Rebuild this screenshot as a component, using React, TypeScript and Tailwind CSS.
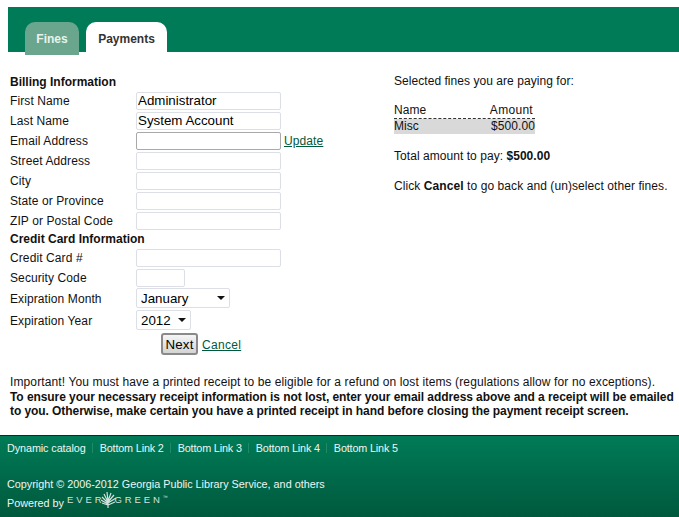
import React from 'react'

const font = { fontFamily: '"Liberation Sans", Arial, sans-serif' }

function Field({ label, value, dark, children }: { label: string; value?: string; dark?: boolean; children?: React.ReactNode }) {
  return (
    <div className="flex items-center h-5">
      <label className="w-[126px] shrink-0 text-xs tracking-[0.1px] text-[#111]">{label}</label>
      <input
        readOnly
        value={value ?? ''}
        className={`w-[145px] h-[18px] px-[1px] text-[13.33px] text-black bg-white rounded-[2px] border outline-none ${dark ? 'border-[#a9a9a9]' : 'border-[#dcdfe6]'}`}
      />
      {children}
    </div>
  )
}

function Dropdown({ label, value, width }: { label: string; value: string; width: string }) {
  return (
    <div className="flex items-center h-[22px]">
      <label className="w-[126px] shrink-0 text-xs tracking-[0.1px] text-[#111]">{label}</label>
      <div className={`relative h-5 self-start ${width}`}>
        <select defaultValue={value} className="block w-full h-full appearance-none bg-white border border-[#dcdfe6] rounded-[2px] pl-[4px] text-[13.33px] text-black outline-none">
          <option>{value}</option>
        </select>
        <svg className="absolute right-[5px] top-[8px] pointer-events-none" width="8" height="4" viewBox="0 0 8 4">
          <path d="M0 0h8L4 4z" fill="#111" />
        </svg>
      </div>
    </div>
  )
}

function EvergreenMark() {
  return (
    <svg width="15" height="16" viewBox="0 0 15 16" className="-ml-[4px] -mr-[1px] -my-[4px]" fill="none" stroke="#d5e2dc" strokeWidth="1.2">
      <path d="M7 16 L7 8 M7 13 L1 11 M7 12 L0 8 M7 11 L1 5 M7 10 L3 2 M7 9 L6 0 M7 9 L10 1 M7 10 L13 3 M7 11 L15 6 M7 13 L14 10" />
    </svg>
  )
}

const links = ['Dynamic catalog', 'Bottom Link 2', 'Bottom Link 3', 'Bottom Link 4', 'Bottom Link 5']

export default function App() {
  return (
    <div className="h-[517px] overflow-hidden bg-white flex flex-col" style={font}>
      {/* tabs */}
      <div className="pt-[7px] pl-2">
        <div className="h-[45px] bg-[#007b57] flex items-start pl-[17px] gap-[7px] pt-[15px]">
          <div className="w-[54px] h-[33px] bg-[#6aa68d] rounded-t-[10px] text-xs font-bold text-[#e8f2ec] flex justify-center pt-[9px]">Fines</div>
          <div className="w-[81px] h-[30px] bg-white rounded-t-[10px] text-xs font-bold text-[#333] flex justify-center pt-[9px]">Payments</div>
        </div>
      </div>

      <div className="flex pl-[10px] pt-[23px]">
        {/* form */}
        <div className="w-[384px] shrink-0">
          <h2 className="text-xs font-bold text-[#111] h-[16px] leading-[14px]">Billing Information</h2>
          <Field label="First Name" value="Administrator" />
          <Field label="Last Name" value="System Account" />
          <Field label="Email Address" dark>
            <a href="#" className="ml-[3px] text-xs tracking-[0.1px] text-[#00593d] underline">Update</a>
          </Field>
          <Field label="Street Address" />
          <Field label="City" />
          <Field label="State or Province" />
          <Field label="ZIP or Postal Code" />
          <h2 className="text-xs font-bold text-[#111] h-[17px] leading-[17px]">Credit Card Information</h2>
          <Field label="Credit Card #" />
          <div className="flex items-center h-5">
            <label className="w-[126px] shrink-0 text-xs tracking-[0.1px] text-[#111]">Security Code</label>
            <input readOnly className="w-[49px] h-[18px] bg-white rounded-[2px] border border-[#dcdfe6] outline-none" />
          </div>
          <Dropdown label="Exipration Month" value="January" width="w-[94px]" />
          <Dropdown label="Expiration Year" value="2012" width="w-[55px]" />
          <div className="flex items-center pl-[151px] pt-[1px] gap-[4px]">
            <button className="w-[37px] h-[22px] text-[13.33px] tracking-[0.2px] text-black border-2 border-[#8a8a8a] rounded-[3px] bg-gradient-to-b from-[#f5f5f5] to-[#d4d4d4]">Next</button>
            <a href="#" className="mt-[1px] text-xs tracking-[0.3px] text-[#00593d] underline">Cancel</a>
          </div>
        </div>

        {/* summary */}
        <div className="text-xs tracking-[0.05px] text-[#111] -mt-[1px]">
          <p className="h-[14px] leading-[14px]">Selected fines you are paying for:</p>
          <div className="w-[141px] mt-[15px]">
            <div className="flex justify-between h-[16px] leading-[15px] border-b border-dashed border-[#333] pr-[2px]">
              <span>Name</span>
              <span className="tracking-[0.3px]">Amount</span>
            </div>
            <div className="flex justify-between h-[15px] leading-[14px] bg-[#d9d9d9]">
              <span>Misc</span>
              <span className="tracking-[0.1px]">$500.00</span>
            </div>
          </div>
          <p className="mt-[15px] leading-[14px]">Total amount to pay: <b>$500.00</b></p>
          <p className="mt-[16px] leading-[14px] tracking-[0.08px]">Click <b>Cancel</b> to go back and (un)select other fines.</p>
        </div>
      </div>

      {/* notice */}
      <div className="pl-[10px] pt-[20px] text-xs leading-[15px] text-[#111]">
        <p className="tracking-[0.12px]">Important! You must have a printed receipt to be eligible for a refund on lost items (regulations allow for no exceptions).</p>
        <p className="font-bold tracking-[-0.07px] leading-[14px] whitespace-nowrap">To ensure your necessary receipt information is not lost, enter your email address above and a receipt will be emailed<br />to you. Otherwise, make certain you have a printed receipt in hand before closing the payment receipt screen.</p>
      </div>

      {/* footer */}
      <footer className="mt-[17px] flex-1 border-t border-[#00302a] bg-gradient-to-b from-[#007b57] to-[#00593d] pl-[7px] pt-[5px] text-[10.8px] text-[#f0f5f2]">
        <div className="flex items-center h-[14px] tracking-[-0.15px]">
          {links.map((l, i) => (
            <React.Fragment key={l}>
              {i > 0 && <span className="w-[1px] h-[10px] bg-[#1f8a66] mx-[6.5px]" />}
              <a href="#" className="first:tracking-[-0.08px]">{l}</a>
            </React.Fragment>
          ))}
        </div>
        <p className="mt-[22px] leading-[14px]">Copyright © 2006-2012 Georgia Public Library Service, and others</p>
        <div className="flex items-center mt-[5px] h-[14px]">
          <span>Powered by</span>
          <span className="ml-[3px] -mt-[6px] flex items-center text-[9.5px] tracking-[2.9px] text-[#d5e2dc]">
            EVER<EvergreenMark />GREEN<span className="-mt-[4px] text-[5px] tracking-normal">™</span>
          </span>
        </div>
      </footer>
    </div>
  )
}
